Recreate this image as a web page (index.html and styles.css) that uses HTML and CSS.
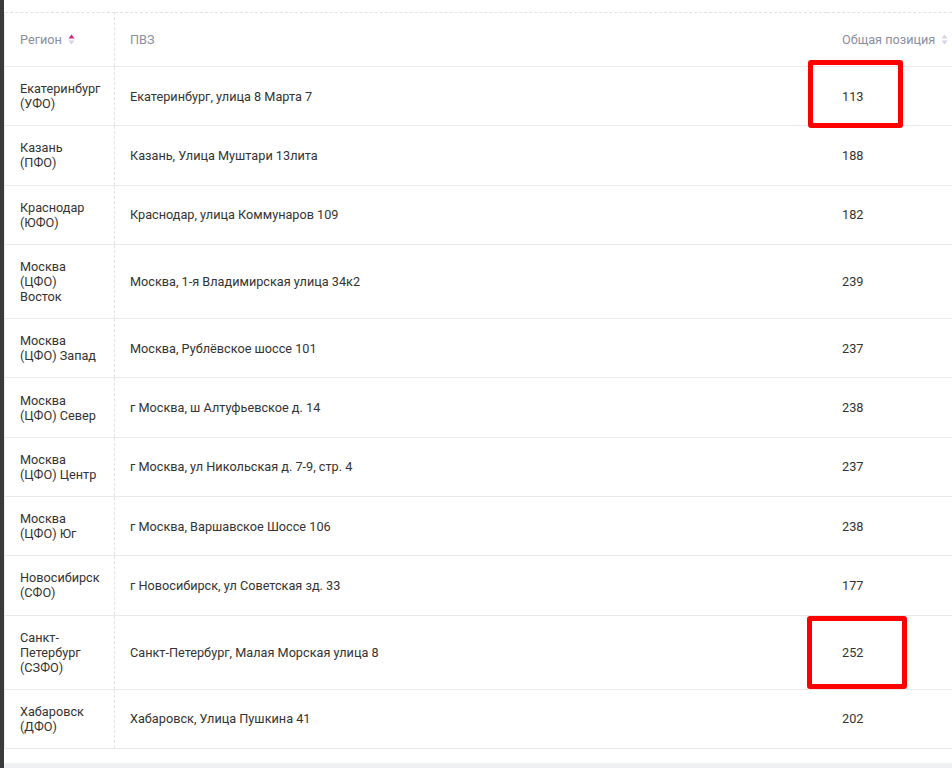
FILE: index.html
```html
<!DOCTYPE html>
<html lang="ru">
<head>
<meta charset="utf-8">
<link rel="stylesheet" href="styles.css">
</head>
<body>
<div class="frame">
  <div class="strip"></div>
  <div class="page">
    <div class="panel">
      <table class="grid">
        <colgroup>
          <col class="c-region">
          <col class="c-pvz">
          <col class="c-pos">
        </colgroup>
        <thead>
          <tr>
            <th class="col-region">Регион <span class="sort"><svg width="7" height="11" viewBox="0 0 7 11"><path d="M3.5 0.5 L6.5 4.5 L0.5 4.5 Z" class="up-active"/><path d="M3.5 10.5 L6.5 6.5 L0.5 6.5 Z" class="down"/></svg></span></th>
            <th class="col-pvz">ПВЗ</th>
            <th class="col-pos">Общая позиция <span class="sort"><svg width="7" height="11" viewBox="0 0 7 11"><path d="M3.5 0.5 L6.5 4.5 L0.5 4.5 Z" class="down"/><path d="M3.5 10.5 L6.5 6.5 L0.5 6.5 Z" class="down"/></svg></span></th>
          </tr>
        </thead>
        <tbody>
          <tr><td class="col-region">Екатеринбург<br>(УФО)</td><td class="col-pvz">Екатеринбург, улица 8 Марта 7</td><td class="col-pos"><span class="mark-wrap">113<span class="mark mark-a"></span></span></td></tr>
          <tr><td class="col-region">Казань<br>(ПФО)</td><td class="col-pvz">Казань, Улица Муштари 13лита</td><td class="col-pos">188</td></tr>
          <tr><td class="col-region">Краснодар<br>(ЮФО)</td><td class="col-pvz">Краснодар, улица Коммунаров 109</td><td class="col-pos">182</td></tr>
          <tr><td class="col-region">Москва<br>(ЦФО)<br>Восток</td><td class="col-pvz">Москва, 1-я Владимирская улица 34к2</td><td class="col-pos">239</td></tr>
          <tr><td class="col-region">Москва<br>(ЦФО) Запад</td><td class="col-pvz">Москва, Рублёвское шоссе 101</td><td class="col-pos">237</td></tr>
          <tr><td class="col-region">Москва<br>(ЦФО) Север</td><td class="col-pvz">г Москва, ш Алтуфьевское д. 14</td><td class="col-pos">238</td></tr>
          <tr><td class="col-region">Москва<br>(ЦФО) Центр</td><td class="col-pvz">г Москва, ул Никольская д. 7-9, стр. 4</td><td class="col-pos">237</td></tr>
          <tr><td class="col-region">Москва<br>(ЦФО) Юг</td><td class="col-pvz">г Москва, Варшавское Шоссе 106</td><td class="col-pos">238</td></tr>
          <tr><td class="col-region">Новосибирск<br>(СФО)</td><td class="col-pvz">г Новосибирск, ул Советская зд. 33</td><td class="col-pos">177</td></tr>
          <tr><td class="col-region">Санкт-<br>Петербург<br>(СЗФО)</td><td class="col-pvz">Санкт-Петербург, Малая Морская улица 8</td><td class="col-pos"><span class="mark-wrap">252<span class="mark mark-b"></span></span></td></tr>
          <tr><td class="col-region">Хабаровск<br>(ДФО)</td><td class="col-pvz">Хабаровск, Улица Пушкина 41</td><td class="col-pos">202</td></tr>
        </tbody>
      </table>
    </div>
    <div class="footer-band"></div>
  </div>
</div>
</body>
</html>
```
FILE: styles.css
```css
html, body {
  margin: 0;
  padding: 0;
  height: 100%;
  overflow: hidden;
}
body {
  font-family: Roboto, "Noto Sans", "Liberation Sans", sans-serif;
  font-size: 12.7px;
  color: #333333;
  background: #ffffff;
}
.frame {
  display: flex;
  height: 768px;
}
.strip {
  width: 4px;
  flex: none;
  background: #3a3a3a;
}
.page {
  flex: 1;
  display: flex;
  flex-direction: column;
  background: #ffffff;
}
.panel {
  padding: 12px 0 14px 0;
  background: #ffffff;
}
.grid {
  width: calc(100% + 20px);
  border-collapse: collapse;
  table-layout: fixed;
  border-left: 1px solid #ececec;
}
.c-region { width: 110px; }
.c-pos { width: 145px; }
.grid th,
.grid td {
  padding: 14.15px 15px;
  line-height: 15px;
  text-align: left;
  vertical-align: middle;
  border-bottom: 1px solid #e9e9e9;
}
.grid thead th {
  padding-top: 19px;
  padding-bottom: 19px;
  font-weight: 400;
  color: #8a8ea0;
  border-top: 1px dashed #e2e2e2;
}
.grid .col-region {
  border-right: 1px dashed #e4e4e4;
}
.grid td.col-region {
  padding-right: 6px;
  white-space: nowrap;
}
.sort {
  display: inline-block;
  vertical-align: -1px;
  margin-left: 3px;
}
.sort svg { display: block; }
.up-active { fill: #d4237f; }
.down { fill: #cfd5e2; }
.mark-wrap {
  position: relative;
  display: inline-block;
}
.mark {
  position: absolute;
  border: 5px solid #ff0000;
  border-radius: 3px;
  box-sizing: border-box;
}
.mark-a {
  left: -34px;
  top: -29px;
  width: 95px;
  height: 68px;
}
.mark-b {
  left: -35px;
  top: -29px;
  width: 100px;
  height: 73px;
}
.footer-band {
  flex: 1;
  background: #eff0f4;
}
```
